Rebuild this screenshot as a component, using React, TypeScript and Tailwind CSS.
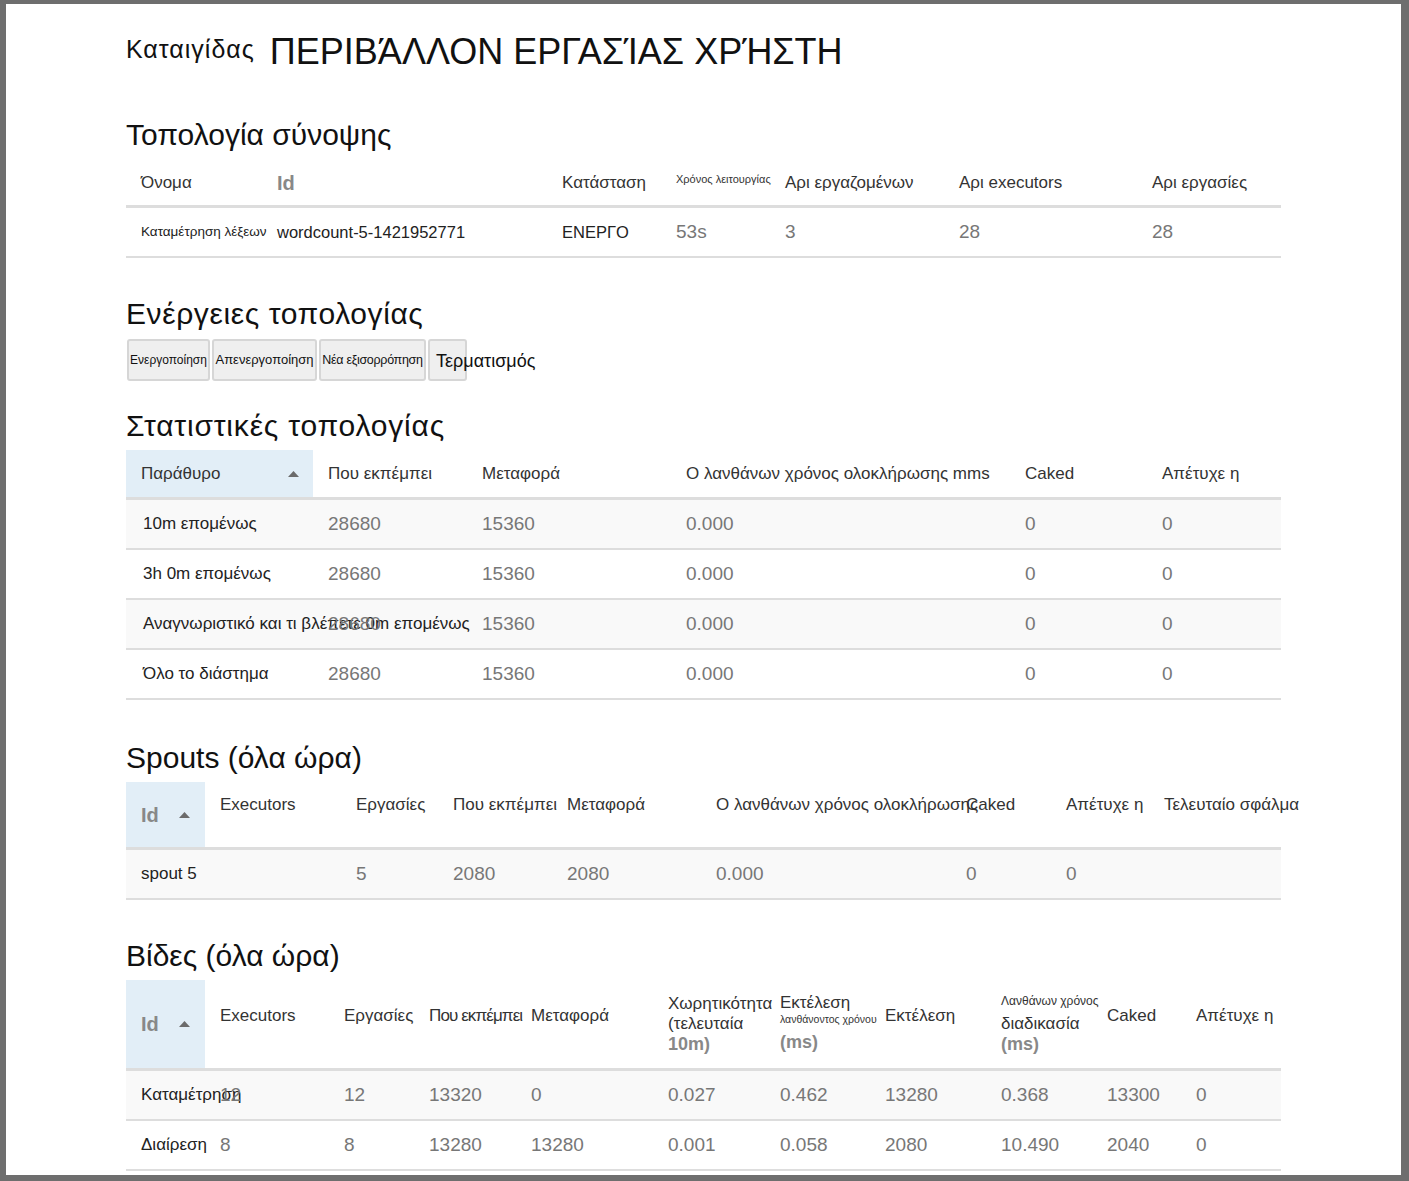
import React from "react";

type Col = { w: number; content: React.ReactNode; cls?: string };

function Cell({ w, children, cls = "" }: { w: number; children?: React.ReactNode; cls?: string }) {
  return (
    <div className={`shrink-0 flex items-center pl-[15px] whitespace-nowrap h-full ${cls}`} style={{ width: w }}>
      {children}
    </div>
  );
}

function Arrow() {
  return (
    <svg width="11" height="6" viewBox="0 0 11 6" className="shrink-0">
      <polygon points="0,6 5.5,0 11,6" fill="#6b6b6b" />
    </svg>
  );
}

const V = "text-[19px] text-[#777]";
const H = "text-[17px] text-[#333]";
const D = "text-[17px] text-[#222]";

function Heading({ children, mt, cls = "" }: { children: React.ReactNode; mt: string; cls?: string }) {
  return <div className={`text-[30px] leading-[36px] h-[36px] text-[#111] ${mt} ${cls}`}>{children}</div>;
}

function BodyRow({ cols, striped }: { cols: Col[]; striped: boolean }) {
  return (
    <div className={`flex h-[50px] border-b-2 border-[#dddddd] ${striped ? "bg-[#f9f9f9]" : "bg-white"}`}>
      {cols.map((c, i) => (
        <Cell key={i} w={c.w} cls={c.cls}>
          {c.content}
        </Cell>
      ))}
    </div>
  );
}

export default function App() {
  const sumW = [136, 285, 114, 109, 174, 193, 144];
  const stW = [187, 154, 204, 339, 137, 134];
  const spW = [79, 136, 97, 114, 149, 250, 100, 98, 132];
  const bW = [79, 124, 85, 102, 137, 112, 105, 116, 106, 89, 100];

  const statsRows = [
    ["10m επομένως", "28680", "15360", "0.000", "0", "0"],
    ["3h 0m επομένως", "28680", "15360", "0.000", "0", "0"],
    ["Αναγνωριστικό και τι βλέπετε 0m επομένως", "28680", "15360", "0.000", "0", "0"],
    ["Όλο το διάστημα", "28680", "15360", "0.000", "0", "0"],
  ];

  const boltRows = [
    ["Καταμέτρηση", "12", "12", "13320", "0", "0.027", "0.462", "13280", "0.368", "13300", "0"],
    ["Διαίρεση", "8", "8", "13280", "13280", "0.001", "0.058", "2080", "10.490", "2040", "0"],
  ];

  return (
    <div
      className="w-[1409px] h-[1181px] bg-[#6e6e6e] pt-[4px] pl-[6px] pr-[8px] pb-[6px]"
      style={{ fontFamily: '"Liberation Sans", Arial, sans-serif' }}
    >
      <div className="h-full w-full bg-white overflow-hidden pl-[120px] pt-[30px]">
        {/* Title */}
        <div className="flex items-start">
          <div className="text-[25px] leading-[25px] tracking-[1px] mt-[3px] text-[#111]">Καταιγίδας</div>
          <div className="text-[36px] leading-[36px] ml-[15px] text-[#111]">ΠΕΡΙΒΆΛΛΟΝ ΕΡΓΑΣΊΑΣ ΧΡΉΣΤΗ</div>
        </div>

        {/* Summary */}
        <Heading mt="mt-[47px]">Τοπολογία σύνοψης</Heading>
        <div className="w-[1155px] mt-[7px]">
          <div className="flex h-[48px] border-b-[3px] border-[#dddddd]">
            <Cell w={sumW[0]} cls={H}>Όνομα</Cell>
            <Cell w={sumW[1]} cls="text-[20px] font-bold text-[#888]">Id</Cell>
            <Cell w={sumW[2]} cls={H}>Κατάσταση</Cell>
            <Cell w={sumW[3]} cls="text-[11px] text-[#333] pb-[7px]">Χρόνος λειτουργίας</Cell>
            <Cell w={sumW[4]} cls={H}>Αρι εργαζομένων</Cell>
            <Cell w={sumW[5]} cls={H}>Αρι executors</Cell>
            <Cell w={sumW[6]} cls={H}>Αρι εργασίες</Cell>
          </div>
          <BodyRow
            striped={false}
            cols={[
              { w: sumW[0], content: "Καταμέτρηση λέξεων", cls: "text-[13.5px] text-[#222]" },
              { w: sumW[1], content: "wordcount-5-1421952771", cls: "text-[16.5px] text-[#222]" },
              { w: sumW[2], content: "ΕΝΕΡΓΟ", cls: "text-[16.5px] text-[#222]" },
              { w: sumW[3], content: "53s", cls: V },
              { w: sumW[4], content: "3", cls: V },
              { w: sumW[5], content: "28", cls: V },
              { w: sumW[6], content: "28", cls: V },
            ]}
          />
        </div>

        {/* Actions */}
        <Heading mt="mt-[38px]" cls="tracking-[0.6px]">Ενέργειες τοπολογίας</Heading>
        <div className="flex mt-[7px] h-[42px] gap-[2px] ml-[1px]">
          <button className="h-full w-[83px] bg-[#efefef] border-2 border-[#d6d6d6] rounded-[3px] text-[12px] text-[#111] whitespace-nowrap flex items-center justify-center">
            Ενεργοποίηση
          </button>
          <button className="h-full w-[105px] bg-[#efefef] border-2 border-[#d6d6d6] rounded-[3px] text-[13px] text-[#111] whitespace-nowrap flex items-center justify-center">
            Απενεργοποίηση
          </button>
          <button className="h-full w-[107px] bg-[#efefef] border-2 border-[#d6d6d6] rounded-[3px] text-[12.5px] tracking-[-0.3px] text-[#111] whitespace-nowrap flex items-center justify-center">
            Νέα εξισορρόπηση
          </button>
          <button className="h-full w-[39px] bg-[#efefef] border-2 border-[#d6d6d6] rounded-[3px] text-[18px] text-[#111] whitespace-nowrap flex items-center pl-[6px] pt-[2px] overflow-visible">
            Τερματισμός
          </button>
        </div>

        {/* Stats */}
        <Heading mt="mt-[27px]" cls="tracking-[0.8px]">Στατιστικές τοπολογίας</Heading>
        <div className="w-[1155px] mt-[6px]">
          <div className="flex h-[50px] border-b-[3px] border-[#dddddd]">
            <Cell w={stW[0]} cls={`${H} bg-[#e2eef7] justify-between pr-[14px]`}>
              <span>Παράθυρο</span>
              <Arrow />
            </Cell>
            <Cell w={stW[1]} cls={H}>Που εκπέμπει</Cell>
            <Cell w={stW[2]} cls={H}>Μεταφορά</Cell>
            <Cell w={stW[3]} cls={H}>Ο λανθάνων χρόνος ολοκλήρωσης mms</Cell>
            <Cell w={stW[4]} cls={H}>Caked</Cell>
            <Cell w={stW[5]} cls={H}>Απέτυχε η</Cell>
          </div>
          {statsRows.map((r, i) => (
            <BodyRow
              key={i}
              striped={i % 2 === 0}
              cols={r.map((v, j) => ({
                w: stW[j],
                content: v,
                cls: j === 0 ? `${D} pl-[17px]` : V,
              }))}
            />
          ))}
        </div>

        {/* Spouts */}
        <Heading mt="mt-[40px]">Spouts (όλα ώρα)</Heading>
        <div className="w-[1155px] mt-[6px]">
          <div className="flex h-[68px] border-b-[3px] border-[#dddddd]">
            <Cell w={spW[0]} cls="bg-[#e2eef7] text-[20px] font-bold text-[#888] gap-[20px]">
              <span>Id</span>
              <Arrow />
            </Cell>
            <Cell w={spW[1]} cls={`${H} pb-[19px]`}>Executors</Cell>
            <Cell w={spW[2]} cls={`${H} pb-[19px]`}>Εργασίες</Cell>
            <Cell w={spW[3]} cls={`${H} pb-[19px]`}>Που εκπέμπει</Cell>
            <Cell w={spW[4]} cls={`${H} pb-[19px]`}>Μεταφορά</Cell>
            <Cell w={spW[5]} cls={`${H} pb-[19px]`}>Ο λανθάνων χρόνος ολοκλήρωσης</Cell>
            <Cell w={spW[6]} cls={`${H} pb-[19px]`}>Caked</Cell>
            <Cell w={spW[7]} cls={`${H} pb-[19px]`}>Απέτυχε η</Cell>
            <Cell w={spW[8]} cls={`${H} pb-[19px]`}>Τελευταίο σφάλμα</Cell>
          </div>
          <BodyRow
            striped={true}
            cols={[
              { w: spW[0], content: "spout 5", cls: D },
              { w: spW[1], content: "", cls: V },
              { w: spW[2], content: "5", cls: V },
              { w: spW[3], content: "2080", cls: V },
              { w: spW[4], content: "2080", cls: V },
              { w: spW[5], content: "0.000", cls: V },
              { w: spW[6], content: "0", cls: V },
              { w: spW[7], content: "0", cls: V },
              { w: spW[8], content: "", cls: V },
            ]}
          />
        </div>

        {/* Bolts */}
        <Heading mt="mt-[38px]">Βίδες (όλα ώρα)</Heading>
        <div className="w-[1155px] mt-[6px]">
          <div className="flex h-[91px] border-b-[3px] border-[#dddddd]">
            <Cell w={bW[0]} cls="bg-[#e2eef7] text-[20px] font-bold text-[#888] gap-[20px]">
              <span>Id</span>
              <Arrow />
            </Cell>
            <Cell w={bW[1]} cls={`${H} pb-[17px]`}>Executors</Cell>
            <Cell w={bW[2]} cls={`${H} pb-[17px]`}>Εργασίες</Cell>
            <Cell w={bW[3]} cls={`${H} pb-[17px] tracking-[-0.9px]`}>Που εκπέμπει</Cell>
            <Cell w={bW[4]} cls={`${H} pb-[17px]`}>Μεταφορά</Cell>
            <Cell w={bW[5]} cls="">
              <div className="flex flex-col leading-[20px]">
                <span className={H}>Χωρητικότητα</span>
                <span className={H}>(τελευταία</span>
                <span className="text-[18px] font-bold text-[#888] leading-[20px]">10m)</span>
              </div>
            </Cell>
            <Cell w={bW[6]} cls="">
              <div className="flex flex-col">
                <span className={`${H} leading-[18px]`}>Εκτέλεση</span>
                <span className="text-[10.5px] text-[#333] leading-[14px]">λανθάνοντος χρόνου</span>
                <span className="text-[18px] font-bold text-[#888] leading-[24px] mt-[4px]">(ms)</span>
              </div>
            </Cell>
            <Cell w={bW[7]} cls={`${H} pb-[17px]`}>Εκτέλεση</Cell>
            <Cell w={bW[8]} cls="">
              <div className="flex flex-col">
                <span className="text-[12px] text-[#333] leading-[14px] mb-[6px]">Λανθάνων χρόνος</span>
                <span className={`${H} leading-[20px]`}>διαδικασία</span>
                <span className="text-[18px] font-bold text-[#888] leading-[20px]">(ms)</span>
              </div>
            </Cell>
            <Cell w={bW[9]} cls={`${H} pb-[17px]`}>Caked</Cell>
            <Cell w={bW[10]} cls={`${H} pb-[17px]`}>Απέτυχε η</Cell>
          </div>
          {boltRows.map((r, i) => (
            <BodyRow
              key={i}
              striped={i % 2 === 0}
              cols={r.map((v, j) => ({
                w: bW[j],
                content: v,
                cls: j === 0 ? D : V,
              }))}
            />
          ))}
        </div>
      </div>
    </div>
  );
}
